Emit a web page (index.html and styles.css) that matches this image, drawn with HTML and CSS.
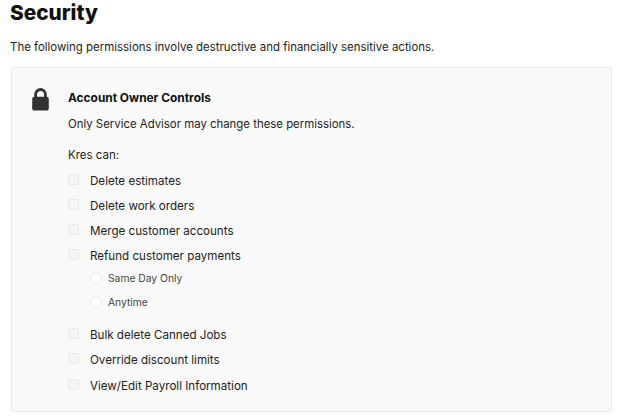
FILE: index.html
```html
<!DOCTYPE html>
<html lang="en">
<head>
<meta charset="utf-8">
<title>Security</title>
<link rel="stylesheet" href="styles.css">
</head>
<body>
<main class="page">
  <h1 class="title">Security</h1>
  <p class="intro">The following permissions involve destructive and financially sensitive actions.</p>
  <section class="card">
    <svg class="lock" viewBox="0 0 17 23" aria-hidden="true">
      <path d="M3.6 10V6.4a4.9 4.9 0 0 1 9.8 0V10" fill="none" stroke="#333" stroke-width="2.8"/>
      <rect x="0.2" y="8.8" width="16.6" height="13.8" rx="2.2" fill="#333"/>
    </svg>
    <div class="content">
      <h2 class="heading">Account Owner Controls</h2>
      <p class="note">Only Service Advisor may change these permissions.</p>
      <p class="lead">Kres can:</p>
      <ul class="perms">
        <li class="perm"><span class="box"></span>Delete estimates</li>
        <li class="perm"><span class="box"></span>Delete work orders</li>
        <li class="perm"><span class="box"></span>Merge customer accounts</li>
        <li class="perm"><span class="box"></span>Refund customer payments</li>
        <li class="options">
          <div class="option"><span class="radio"></span>Same Day Only</div>
          <div class="option"><span class="radio"></span>Anytime</div>
        </li>
        <li class="perm"><span class="box"></span>Bulk delete Canned Jobs</li>
        <li class="perm"><span class="box"></span>Override discount limits</li>
        <li class="perm perm-last"><span class="box"></span>View/Edit Payroll Information</li>
      </ul>
    </div>
  </section>
</main>
</body>
</html>
```
FILE: styles.css
```css
* { box-sizing: border-box; }
html, body { margin: 0; padding: 0; background: #fff; }
body { font-family: Inter, "Liberation Sans", sans-serif; color: #222; width: 619px; height: 417px; overflow: hidden; }
.page { padding: 0 7px 0 11px; }
.title { margin: 0 0 0 -1px; font-size: 20.8px; line-height: 26px; font-weight: 800; color: #111; }
.intro { margin: 14px 0 0 -1px; font-size: 11.45px; line-height: 14px; color: #222; }
.card { margin-top: 13px; height: 345px; display: flex; background: #fafafa; border: 1px solid #e8e8e8; border-radius: 3px; padding: 20px 0 0 20px; }
.lock { width: 17px; height: 23px; flex: none; }
.content { margin-left: 19px; }
.heading { margin: 3px 0 0; font-size: 11.9px; line-height: 14px; font-weight: 700; color: #111; }
.note { margin: 12px 0 0; font-size: 11.4px; line-height: 14px; }
.lead { margin: 17px 0 0; font-size: 11.5px; line-height: 14px; }
.perms { list-style: none; margin: 12px 0 0; padding: 0; display: flex; flex-direction: column; gap: 11px; }
.perm { display: flex; font-size: 11.6px; line-height: 14px; }
.perm-last { margin-top: 1px; }
.box { width: 11px; height: 11px; margin: 0 11px 0 0; background: #f5f5f5; border: 1px solid #e8e8e8; border-radius: 2px; }
.options { display: flex; flex-direction: column; gap: 10px; margin: -3px 0 8px 22px; }
.option { display: flex; align-items: center; font-size: 10.3px; line-height: 14px; color: #444; }
.radio { width: 12px; height: 12px; margin-right: 6px; background: #fff; border: 1px solid #e8e8e8; border-radius: 50%; }
```
